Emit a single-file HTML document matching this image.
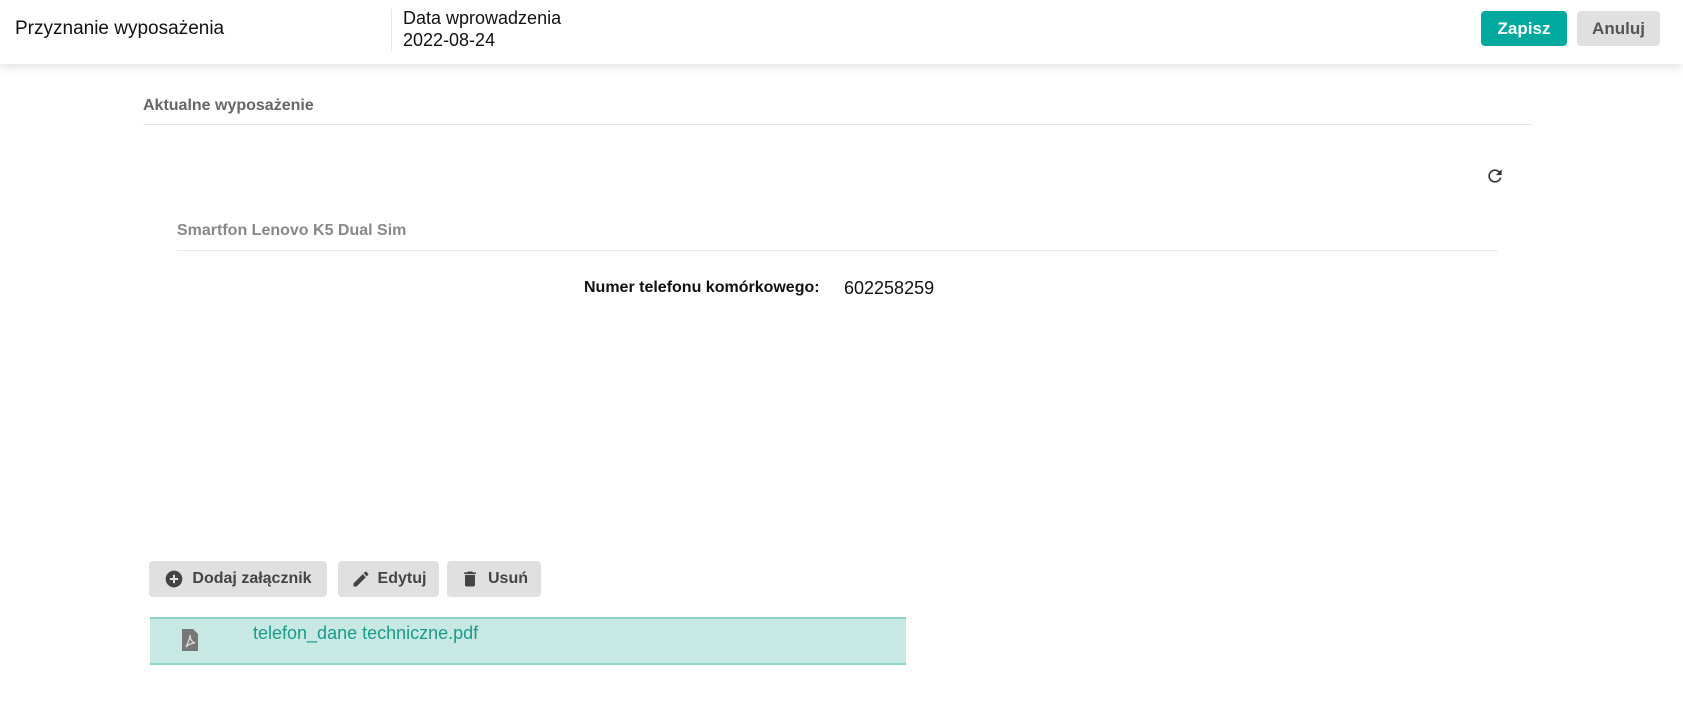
<!DOCTYPE html>
<html><head><meta charset="utf-8"><style>
*{margin:0;padding:0;box-sizing:border-box}
body{width:1683px;height:724px;background:#fff;font-family:"Liberation Sans",sans-serif;position:relative;overflow:hidden;color:#222}
.a{position:absolute;white-space:nowrap}
.hdr{position:absolute;left:0;top:0;width:1683px;height:64px;background:#fff;box-shadow:0 3px 10px rgba(0,0,0,0.12)}
.btn{position:absolute;border-radius:4px;font-size:17px;display:flex;align-items:center;justify-content:center}
.gb{background:#e0e0e0;color:#444;top:561px;height:36px;font-size:16px;font-weight:bold}
</style></head><body>
<div class="hdr"></div>
<div class="a" style="left:15px;top:18px;font-size:19px;color:#111">Przyznanie wyposażenia</div>
<div class="a" style="left:391px;top:9px;width:1px;height:42px;background:#e6e6e6"></div>
<div class="a" style="left:403px;top:8px;font-size:18px;color:#111">Data wprowadzenia</div>
<div class="a" style="left:403px;top:30px;font-size:18px;color:#111">2022-08-24</div>
<div class="btn" style="left:1481px;top:11px;width:86px;height:35px;background:#00a99d;color:#fff;font-weight:bold">Zapisz</div>
<div class="btn" style="left:1577px;top:11px;width:83px;height:35px;background:#e0e0e0;color:#555;font-weight:bold">Anuluj</div>
<div class="a" style="left:143px;top:97px;font-size:16px;font-weight:bold;color:#666">Aktualne wyposażenie</div>
<div class="a" style="left:143px;top:124px;width:1389px;height:1px;background:#e6e6e6"></div>
<svg class="a" style="left:1485px;top:166px" width="20" height="20" viewBox="0 0 24 24"><path fill="#333" d="M17.65 6.35A7.958 7.958 0 0 0 12 4c-4.42 0-7.99 3.58-7.99 8s3.57 8 7.99 8c3.730 0 6.84-2.55 7.73-6h-2.08A5.99 5.99 0 0 1 12 18c-3.31 0-6-2.69-6-6s2.690-6 6-6c1.66 0 3.14.69 4.22 1.78L13 11h7V4l-2.35 2.35z"/></svg>
<div class="a" style="left:177px;top:222px;font-size:16px;font-weight:bold;color:#888">Smartfon Lenovo K5 Dual Sim</div>
<div class="a" style="left:177px;top:250px;width:1321px;height:1px;background:#e6e6e6"></div>
<div class="a" style="left:584px;top:279px;font-size:16px;font-weight:bold;color:#111">Numer telefonu komórkowego:</div>
<div class="a" style="left:844px;top:278px;font-size:18px;color:#111">602258259</div>
<div class="btn gb" style="left:149px;width:178px"><svg width="20" height="20" viewBox="0 0 24 24" style="margin-right:8px"><circle cx="12" cy="12" r="10" fill="#444"/><path d="M12 7v10M7 12h10" stroke="#e0e0e0" stroke-width="2.4"/></svg>Dodaj załącznik</div>
<div class="btn gb" style="left:338px;width:101px"><svg width="20" height="20" viewBox="0 0 24 24" style="margin-right:7px"><path fill="#444" d="M3 17.25V21h3.75L17.81 9.94l-3.75-3.75L3 17.25zM20.71 7.04a1 1 0 0 0 0-1.41l-2.34-2.34a1 1 0 0 0-1.41 0l-1.83 1.83 3.75 3.75 1.83-1.830z"/></svg>Edytuj</div>
<div class="btn gb" style="left:447px;width:94px"><svg width="20" height="20" viewBox="0 0 24 24" style="margin-right:8px"><path fill="#444" d="M6 19c0 1.1.9 2 2 2h8c1.1 0 2-.9 2-2V7H6v12zM19 4h-3.5l-1-1h-5l-1 1H5v2h14V4z"/></svg>Usuń</div>
<div class="a" style="left:150px;top:617px;width:756px;height:48px;background:#c8e9e3;border-top:2px solid #8fd4c7;border-bottom:2px solid #8fd4c7"></div>
<svg class="a" style="left:181px;top:628px" width="18" height="24" viewBox="0 0 18 24"><path fill="#777" d="M1 1h11l5 5v17H1z"/><path d="M5 19c2-4 4-9 4-12c0 4 2 7 5 8c-3 0-6 1-9 4z" fill="none" stroke="#ddd" stroke-width="1.3"/></svg>
<div class="a" style="left:253px;top:623px;font-size:18px;color:#1a9a8a">telefon_dane techniczne.pdf</div>
</body></html>
